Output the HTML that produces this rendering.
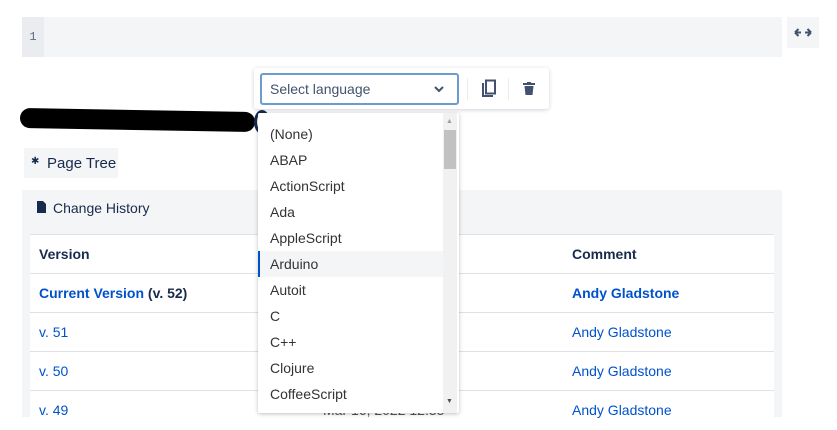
<!DOCTYPE html>
<html><head><style>
body{margin:0;width:837px;height:417px;overflow:hidden;background:#fff;font-family:"Liberation Sans",sans-serif;color:#172b4d;position:relative}
.a{position:absolute}
.t{font-size:14px}
.row{position:absolute;left:30px;width:744px;height:39px;border-top:1px solid #dfe1e6;background:#fff}
.row span{position:absolute;top:11px;font-size:14px}
.lnk{color:#0052cc}
.it{position:absolute;left:0;width:185px;height:26px;line-height:26px;padding-left:12px;font-size:14px;color:#333}
</style></head><body>
<div class="a" style="left:22px;top:17px;width:760px;height:40px;background:#f4f5f7"></div>
<div class="a" style="left:22px;top:17px;width:22px;height:40px;background:#ebecf0;font-family:'Liberation Mono',monospace;font-size:12px;color:#5e6c84;line-height:40px;text-align:center">1</div>
<div class="a" style="left:787px;top:17px;width:32px;height:31px;background:#f4f5f7"></div>
<svg class="a" style="left:794px;top:28px" width="18" height="9"><path d="M1 4.5h6M1 4.5l3.5-3.5M1 4.5l3.5 3.5M17 4.5h-6M17 4.5l-3.5-3.5M17 4.5l-3.5 3.5" stroke="#42526e" stroke-width="2" fill="none"/></svg>

<div class="a" style="left:20px;top:110px;width:235px;height:20px;background:#000;border-radius:10px;transform:rotate(1deg)"></div>
<div class="a" style="left:254px;top:110px;width:10px;height:18px;border:3px solid #172b4d;border-radius:50%"></div>

<div class="a" style="left:254px;top:68px;width:295px;height:41px;background:#fff;border-radius:3px;box-shadow:0 1px 4px rgba(9,30,66,.2)"></div>
<div class="a" style="left:260px;top:73px;width:195px;height:28px;border:2px solid #6c9bd0;border-radius:3px;background:#fff"><span style="position:absolute;left:8px;top:6px;font-size:14px;color:#42526e">Select language</span><svg style="position:absolute;left:172px;top:10px" width="10" height="8"><path d="M1 2l4 4 4-4" stroke="#42526e" stroke-width="2" fill="none"/></svg></div>
<div class="a" style="left:467px;top:78px;width:1px;height:22px;background:#ebecf0"></div>
<div class="a" style="left:508px;top:78px;width:1px;height:22px;background:#ebecf0"></div>
<svg class="a" style="left:480px;top:79px" width="18" height="20"><path d="M3 4v13h10" stroke="#42526e" stroke-width="2" fill="none"/><rect x="6" y="1.5" width="9" height="13" stroke="#42526e" stroke-width="2" fill="none"/></svg>
<svg class="a" style="left:523px;top:82px" width="12" height="14"><rect x="0" y="1" width="12" height="2" fill="#42526e"/><rect x="4" y="0" width="4" height="2" fill="#42526e"/><path d="M1.5 4h9l-1 9h-7z" fill="#42526e"/></svg>

<div class="a" style="left:24px;top:148px;width:94px;height:30px;background:#f4f5f7"><span style="position:absolute;left:7px;top:8px;font-size:10px">✱</span><span style="position:absolute;left:23px;top:7px;font-size:15px">Page Tree</span></div>

<div class="a" style="left:22px;top:190px;width:760px;height:227px;background:#f4f5f7"></div>
<svg class="a" style="left:37px;top:201px" width="9" height="12"><path d="M0 0h6l3 3v9h-9z" fill="#172b4d"/></svg>
<div class="a t" style="left:53px;top:200px">Change History</div>
<div class="row" style="top:234px"><span style="left:9px;font-weight:bold">Version</span><span style="left:542px;font-weight:bold">Comment</span></div>
<div class="row" style="top:273px"><span style="left:9px;font-weight:bold"><span class="lnk" style="position:static">Current Version</span> (v. 52)</span><span class="lnk" style="left:542px;font-weight:bold">Andy Gladstone</span></div>
<div class="row" style="top:312px"><span class="lnk" style="left:9px">v. 51</span><span class="lnk" style="left:542px">Andy Gladstone</span></div>
<div class="row" style="top:351px"><span class="lnk" style="left:9px">v. 50</span><span class="lnk" style="left:542px">Andy Gladstone</span></div>
<div class="row" style="top:390px"><span class="lnk" style="left:9px">v. 49</span><span style="left:293px;color:#555">Mar 16, 2022 12:35</span><span class="lnk" style="left:542px">Andy Gladstone</span></div>

<div class="a" style="left:258px;top:113px;width:201px;height:300px;background:#fff;box-shadow:0 1px 4px rgba(0,0,0,.25);border-radius:2px;overflow:hidden">
<div class="it" style="top:8px">(None)</div>
<div class="it" style="top:34px">ABAP</div>
<div class="it" style="top:60px">ActionScript</div>
<div class="it" style="top:86px">Ada</div>
<div class="it" style="top:112px">AppleScript</div>
<div class="it" style="top:138px;background:#f4f5f7;border-left:2px solid #0052cc;padding-left:10px">Arduino</div>
<div class="it" style="top:164px">Autoit</div>
<div class="it" style="top:190px">C</div>
<div class="it" style="top:216px">C++</div>
<div class="it" style="top:242px">Clojure</div>
<div class="it" style="top:268px">CoffeeScript</div>
<div style="position:absolute;left:185px;top:0;width:14px;height:300px;background:#f1f1f1"></div>
<div style="position:absolute;left:186px;top:17px;width:12px;height:39px;background:#c1c1c1"></div>
<div style="position:absolute;left:188px;top:5px;font-size:7px;color:#a0a0a0">▲</div>
<div style="position:absolute;left:188px;top:285px;font-size:7px;color:#505050">▼</div>
</div>
</body></html>
